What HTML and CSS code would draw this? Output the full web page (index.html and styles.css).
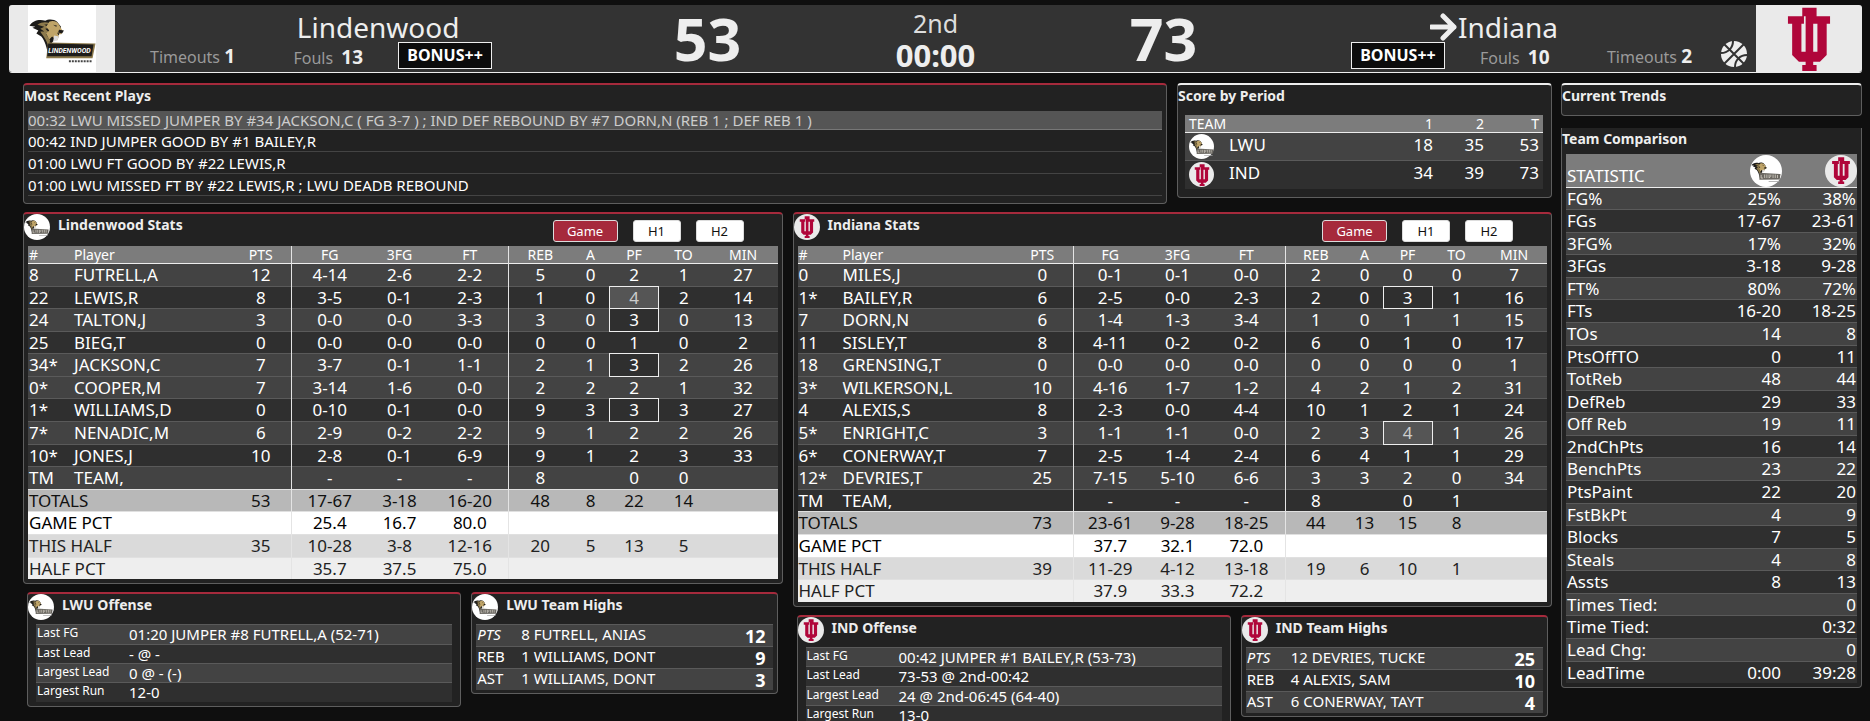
FILE: index.html
```html
<!DOCTYPE html>
<html lang="en">
<head>
<meta charset="utf-8">
<title>Lindenwood vs Indiana - Live Stats</title>
<link rel="stylesheet" href="styles.css">
</head>
<body>
<svg class="defs" aria-hidden="true">
  <symbol id="lion" viewBox="0 0 68 68">
    <path fill="#1d1c1a" d="M1 21C4 16 11 14 17 16 20 14 26 14 29 17L33 22 32 29 24 38 20 50C18 42 17 37 13 32L8 29 10 26 4 23 7 22Z"/>
    <path fill="#8d7a4c" d="M9 20C14 17 18 17 22 19L16 20 22 23 17 24 21 28 18 30 22 36 20 42C18 34 14 31 12 27L16 27 12 24 16 22Z"/>
    <path fill="#bfa468" d="M21 17C25 15 30 17 31 20L35 27 33 30 29 28 31 32 29 36 24 32 21 35 18 29 21 26 18 22Z"/>
    <path fill="#1d1c1a" d="M25 20l4 1-1 1zM31 25l5 1-2 3-4-1z"/>
    <path fill="#ddd" d="M26 31l5 1-2 4-4 1z"/>
  </symbol>
  <symbol id="lion-mark" viewBox="0 0 68 68">
    <use href="#lion"/>
    <path fill="#6b6862" d="M19 38l48 3-2 12-46 1z"/>
    <path fill="none" stroke="#cfcac0" stroke-width="2" d="M23 43v7h4m4-8v8m5-8v8m5-8v8l4-4v-4m5 0v8m5-8v8m5-7v7"/>
    <path fill="#aaa" d="M40 57h24v2H40z"/>
  </symbol>
  <symbol id="trident" viewBox="0 0 50 76">
    <path fill="#b0063a" d="M17 1h17v10h-4v42h5V20h-5V11h20v9h-4v37l-8 8h-8v4h4v7H17v-7h4v-4h-8l-8-8V20H0v-9h19v9h-3v33h5V11h-4z"/>
  </symbol>
</svg>

<header class="scoreboard">
  <div class="logo-box"><div class="logo-photo"><svg class="lion-logo" viewBox="0 0 68 68" role="img" aria-label="Lindenwood"><use href="#lion"/><path fill="#8d7a4c" d="M20 38l48 1-3 15H18z"/><path fill="#1d1c1a" d="M20 39l46 1-2 12H19z"/><text class="wordmark" x="20" y="49">LINDENWOOD</text><path stroke="#444" stroke-width="2" stroke-dasharray="2 1" d="M41 57h23"/></svg></div></div>
  <div class="side side-away">
    <div class="timeouts">Timeouts <b>1</b></div>
    <div class="team">
      <div class="team-name">Lindenwood</div>
      <div class="team-line"><span class="fouls">Fouls <b>13</b></span><strong class="bonus">BONUS++</strong></div>
    </div>
  </div>
  <div class="score">53</div>
  <div class="clock"><div class="period">2nd</div><div class="time">00:00</div></div>
  <div class="score">73</div>
  <div class="side side-home">
    <div class="team">
      <div class="team-name"><svg class="arrow" viewBox="0 0 28 28" aria-label="Possession"><path d="M1 14h23M13 3l11 11-11 11" fill="none" stroke="#eee" stroke-width="5" stroke-linecap="round" stroke-linejoin="round"/></svg>Indiana</div>
      <div class="team-line"><strong class="bonus">BONUS++</strong><span class="fouls">Fouls <b>10</b></span></div>
    </div>
    <div class="timeouts">Timeouts <b>2</b></div>
    <svg class="ball" viewBox="0 0 26 26" aria-hidden="true"><circle cx="13" cy="13" r="13" fill="#eee"/><path fill="none" stroke="#333" stroke-width="2" d="M3 3l20 20M23 3L3 23M12 0c0 7-5 12-12 12M26 14c-7 0-12 5-12 12"/></svg>
  </div>
  <div class="logo-box"><svg class="iu-logo" role="img" aria-label="Indiana"><use href="#trident"/></svg></div>
</header>

<main class="page">
  <div class="main-col">
    <div class="row-top">
      <section class="panel red">
        <h2>Most Recent Plays</h2>
        <ul class="plays">
          <li class="latest">00:32 LWU MISSED JUMPER BY #34 JACKSON,C ( FG 3-7 ) ; IND DEF REBOUND BY #7 DORN,N (REB 1 ; DEF REB 1 )</li>
          <li>00:42 IND JUMPER GOOD BY #1 BAILEY,R</li>
          <li>01:00 LWU FT GOOD BY #22 LEWIS,R</li>
          <li>01:00 LWU MISSED FT BY #22 LEWIS,R ; LWU DEADB REBOUND</li>
        </ul>
      </section>
      <section class="panel white">
        <h2>Score by Period</h2>
        <table class="periods">
          <thead><tr><th colspan="2">TEAM<th>1<th>2<th>T</thead>
          <tbody>
            <tr><td><span class="badge"><svg><use href="#lion-mark"/></svg></span><td>LWU<td>18<td>35<td>53
            <tr><td><span class="badge iu"><svg><use href="#trident"/></svg></span><td>IND<td>34<td>39<td>73
          </tbody>
        </table>
      </section>
    </div>

    <div class="row-teams">
      <div class="team-col">
        <section class="panel red stats-panel">
          <div class="panel-head"><span class="badge"><svg><use href="#lion-mark"/></svg></span><h2>Lindenwood Stats</h2>
            <div class="tabs"><button class="on" type="button">Game</button><button type="button">H1</button><button type="button">H2</button></div></div>
          <table class="stats">
            <colgroup><col class="w45"><col><col class="w61"><col class="w76"><col class="w64"><col class="w77"><col class="w63"><col class="w38"><col class="w49"><col class="w50"><col class="w69"></colgroup>
            <thead><tr><th>#<th>Player<th>PTS<th>FG<th>3FG<th>FT<th>REB<th>A<th>PF<th>TO<th>MIN</thead>
            <tbody>
              <tr><td>8<td>FUTRELL,A<td>12<td>4-14<td>2-6<td>2-2<td>5<td>0<td>2<td>1<td>27
              <tr><td>22<td>LEWIS,R<td>8<td>3-5<td>0-1<td>2-3<td>1<td>0<td class="foul4">4<td>2<td>14
              <tr><td>24<td>TALTON,J<td>3<td>0-0<td>0-0<td>3-3<td>3<td>0<td class="foul3">3<td>0<td>13
              <tr><td>25<td>BIEG,T<td>0<td>0-0<td>0-0<td>0-0<td>0<td>0<td>1<td>0<td>2
              <tr><td>34*<td>JACKSON,C<td>7<td>3-7<td>0-1<td>1-1<td>2<td>1<td class="foul3">3<td>2<td>26
              <tr><td>0*<td>COOPER,M<td>7<td>3-14<td>1-6<td>0-0<td>2<td>2<td>2<td>1<td>32
              <tr><td>1*<td>WILLIAMS,D<td>0<td>0-10<td>0-1<td>0-0<td>9<td>3<td class="foul3">3<td>3<td>27
              <tr><td>7*<td>NENADIC,M<td>6<td>2-9<td>0-2<td>2-2<td>9<td>1<td>2<td>2<td>26
              <tr><td>10*<td>JONES,J<td>10<td>2-8<td>0-1<td>6-9<td>9<td>1<td>2<td>3<td>33
              <tr><td>TM<td>TEAM,<td><td>-<td>-<td>-<td>8<td><td>0<td>0<td>
            </tbody>
            <tfoot>
              <tr><td colspan="2">TOTALS<td>53<td>17-67<td>3-18<td>16-20<td>48<td>8<td>22<td>14<td>
              <tr><td colspan="2">GAME PCT<td><td>25.4<td>16.7<td>80.0<td><td><td><td><td>
              <tr><td colspan="2">THIS HALF<td>35<td>10-28<td>3-8<td>12-16<td>20<td>5<td>13<td>5<td>
              <tr><td colspan="2">HALF PCT<td><td>35.7<td>37.5<td>75.0<td><td><td><td><td>
            </tfoot>
          </table>
        </section>
        <div class="row-extra">
          <section class="panel red">
            <div class="panel-head"><span class="badge"><svg><use href="#lion-mark"/></svg></span><h2>LWU Offense</h2></div>
            <table class="offense">
              <tr><th>Last FG<td>01:20 JUMPER #8 FUTRELL,A (52-71)
              <tr><th>Last Lead<td>- @ -
              <tr><th>Largest Lead<td>0 @ - (-)
              <tr><th>Largest Run<td>12-0
            </table>
          </section>
          <section class="panel red">
            <div class="panel-head"><span class="badge"><svg><use href="#lion-mark"/></svg></span><h2>LWU Team Highs</h2></div>
            <table class="highs">
              <tr><th><em>PTS</em><td>8 FUTRELL, ANIAS<td>12
              <tr><th>REB<td>1 WILLIAMS, DONT<td>9
              <tr><th>AST<td>1 WILLIAMS, DONT<td>3
            </table>
          </section>
        </div>
      </div>

      <div class="team-col">
        <section class="panel red stats-panel">
          <div class="panel-head"><span class="badge iu"><svg><use href="#trident"/></svg></span><h2>Indiana Stats</h2>
            <div class="tabs"><button class="on" type="button">Game</button><button type="button">H1</button><button type="button">H2</button></div></div>
          <table class="stats">
            <colgroup><col class="w44"><col><col class="w61"><col class="w74"><col class="w61"><col class="w77"><col class="w61"><col class="w37"><col class="w49"><col class="w49"><col class="w66"></colgroup>
            <thead><tr><th>#<th>Player<th>PTS<th>FG<th>3FG<th>FT<th>REB<th>A<th>PF<th>TO<th>MIN</thead>
            <tbody>
              <tr><td>0<td>MILES,J<td>0<td>0-1<td>0-1<td>0-0<td>2<td>0<td>0<td>0<td>7
              <tr><td>1*<td>BAILEY,R<td>6<td>2-5<td>0-0<td>2-3<td>2<td>0<td class="foul3">3<td>1<td>16
              <tr><td>7<td>DORN,N<td>6<td>1-4<td>1-3<td>3-4<td>1<td>0<td>1<td>1<td>15
              <tr><td>11<td>SISLEY,T<td>8<td>4-11<td>0-2<td>0-2<td>6<td>0<td>1<td>0<td>17
              <tr><td>18<td>GRENSING,T<td>0<td>0-0<td>0-0<td>0-0<td>0<td>0<td>0<td>0<td>1
              <tr><td>3*<td>WILKERSON,L<td>10<td>4-16<td>1-7<td>1-2<td>4<td>2<td>1<td>2<td>31
              <tr><td>4<td>ALEXIS,S<td>8<td>2-3<td>0-0<td>4-4<td>10<td>1<td>2<td>1<td>24
              <tr><td>5*<td>ENRIGHT,C<td>3<td>1-1<td>1-1<td>0-0<td>2<td>3<td class="foul4">4<td>1<td>26
              <tr><td>6*<td>CONERWAY,T<td>7<td>2-5<td>1-4<td>2-4<td>6<td>4<td>1<td>1<td>29
              <tr><td>12*<td>DEVRIES,T<td>25<td>7-15<td>5-10<td>6-6<td>3<td>3<td>2<td>0<td>34
              <tr><td>TM<td>TEAM,<td><td>-<td>-<td>-<td>8<td><td>0<td>1<td>
            </tbody>
            <tfoot>
              <tr><td colspan="2">TOTALS<td>73<td>23-61<td>9-28<td>18-25<td>44<td>13<td>15<td>8<td>
              <tr><td colspan="2">GAME PCT<td><td>37.7<td>32.1<td>72.0<td><td><td><td><td>
              <tr><td colspan="2">THIS HALF<td>39<td>11-29<td>4-12<td>13-18<td>19<td>6<td>10<td>1<td>
              <tr><td colspan="2">HALF PCT<td><td>37.9<td>33.3<td>72.2<td><td><td><td><td>
            </tfoot>
          </table>
        </section>
        <div class="row-extra">
          <section class="panel red">
            <div class="panel-head"><span class="badge iu"><svg><use href="#trident"/></svg></span><h2>IND Offense</h2></div>
            <table class="offense">
              <tr><th>Last FG<td>00:42 JUMPER #1 BAILEY,R (53-73)
              <tr><th>Last Lead<td>73-53 @ 2nd-00:42
              <tr><th>Largest Lead<td>24 @ 2nd-06:45 (64-40)
              <tr><th>Largest Run<td>13-0
            </table>
          </section>
          <section class="panel red">
            <div class="panel-head"><span class="badge iu"><svg><use href="#trident"/></svg></span><h2>IND Team Highs</h2></div>
            <table class="highs">
              <tr><th><em>PTS</em><td>12 DEVRIES, TUCKE<td>25
              <tr><th>REB<td>4 ALEXIS, SAM<td>10
              <tr><th>AST<td>6 CONERWAY, TAYT<td>4
            </table>
          </section>
        </div>
      </div>
    </div>
  </div>

  <aside class="side-col">
    <section class="panel white trends"><h2>Current Trends</h2></section>
    <section class="panel plain">
      <h2>Team Comparison</h2>
      <table class="compare">
        <thead><tr><th>STATISTIC<th><span class="badge big"><svg><use href="#lion-mark"/></svg></span><th><span class="badge big iu"><svg><use href="#trident"/></svg></span></thead>
        <tbody>
          <tr><td>FG%<td>25%<td>38%
          <tr><td>FGs<td>17-67<td>23-61
          <tr><td>3FG%<td>17%<td>32%
          <tr><td>3FGs<td>3-18<td>9-28
          <tr><td>FT%<td>80%<td>72%
          <tr><td>FTs<td>16-20<td>18-25
          <tr><td>TOs<td>14<td>8
          <tr><td>PtsOffTO<td>0<td>11
          <tr><td>TotReb<td>48<td>44
          <tr><td>DefReb<td>29<td>33
          <tr><td>Off Reb<td>19<td>11
          <tr><td>2ndChPts<td>16<td>14
          <tr><td>BenchPts<td>23<td>22
          <tr><td>PtsPaint<td>22<td>20
          <tr><td>FstBkPt<td>4<td>9
          <tr><td>Blocks<td>7<td>5
          <tr><td>Steals<td>4<td>8
          <tr><td>Assts<td>8<td>13
          <tr><td>Times Tied:<td><td>0
          <tr><td>Time Tied:<td><td>0:32
          <tr><td>Lead Chg:<td><td>0
          <tr><td>LeadTime<td>0:00<td>39:28
        </tbody>
      </table>
    </section>
  </aside>
</main>
</body>
</html>
```

FILE: styles.css
```css
* { box-sizing: border-box; }

html { background: #0f0f0f; }

body {
  margin: 0;
  padding: 5px 8px 0 9px;
  background: #0f0f0f;
  color: #fff;
  font: 15px/22px "Segoe UI", "Noto Sans", "Open Sans", sans-serif;
  white-space: nowrap;
}

.defs { position: absolute; width: 0; height: 0; }

/* Scoreboard */
.scoreboard {
  display: grid;
  grid-template-columns: 106px 1fr 228px 228px 228px 1fr 106px;
  height: 68px;
  background: #333;
  color: #eee;
  border-bottom: 1px solid #eee;
  border-radius: 3px;
}
.logo-box { display: flex; justify-content: center; align-items: center; background: #eaeaea; }
.logo-box:first-child { border-radius: 3px 0 0 3px; }
.logo-box:last-child { border-radius: 0 3px 3px 0; }
.logo-photo { width: 68px; height: 67px; background: #fff; }
.lion-logo { display: block; width: 68px; height: 67px; }
.wordmark { font: italic bold 7px "Roboto", sans-serif; fill: #fff; }
.iu-logo { width: 50px; height: 64px; }

.side { display: flex; align-items: flex-end; }
.side-away { padding-left: 35px; gap: 29px; }
.side-home { padding-right: 9px; justify-content: flex-end; }
.timeouts, .fouls { color: #9a9a9a; font-size: 16px; line-height: 30px; }
.timeouts b, .fouls b { color: #eee; font-size: 19px; }
.fouls b { margin-left: 4px; }
.team { width: 228px; height: 67px; }
.team-name { padding-top: 7px; font-size: 28px; line-height: 30px; text-align: center; }
.team-line { display: flex; height: 30px; align-items: flex-start; justify-content: flex-end; gap: 35px; }
.bonus {
  width: 94px;
  height: 27px;
  border: 1px solid #eee;
  background: #0c0c0c;
  color: #fff;
  font-size: 16px;
  line-height: 24px;
  text-align: center;
}
.side-home .team { width: 256px; }
.side-home .team-name { display: flex; align-items: center; padding-left: 79px; }
.side-home .team-line { justify-content: flex-start; }
.arrow { width: 28px; height: 28px; }
.ball { width: 26px; height: 26px; margin: 0 0 5px 29px; }
.score { font-size: 59px; font-weight: bold; line-height: 66px; text-align: center; }
.clock { text-align: center; }
.period { padding-top: 2px; font-size: 25px; line-height: 32px; color: #ddd; }
.time { font-size: 31px; font-weight: bold; line-height: 33px; }

/* Page grid */
.page {
  display: grid;
  grid-template-columns: 1529fr 301fr;
  gap: 9px;
  padding: 10px 0 0 14px;
}
.main-col { display: grid; align-content: start; gap: 8px; }
.row-top { display: grid; grid-template-columns: 1144fr 375fr; gap: 10px; align-items: start; }
.row-teams { display: grid; grid-template-columns: 1fr 1fr; gap: 10px; align-items: start; }
.team-col { display: grid; gap: 8px; }
.row-extra { display: grid; grid-template-columns: 434fr 307fr; gap: 10px; align-items: start; padding: 0 4px; }
.side-col { display: grid; gap: 12px; align-content: start; }

.panel { background: #222; border: 1px solid #5e5e5e; border-top: 2px solid; border-radius: 4px; }
.panel.red { border-top-color: #a62a3c; }
.panel.white { border-top-color: #eee; }
.panel.plain { border-top: 0; border-radius: 0 0 4px 4px; padding: 0 4px 4px; }
.panel.plain h2 { margin: 0 0 4px -4px; }
.trends { height: 33px; }
h2 { margin: 0; font-size: 14px; line-height: 22px; color: #eee; }

.plays { margin: 4px 4px 7px; padding: 0; list-style: none; }
.plays li { height: 22px; padding-top: 2px; border-bottom: 1px solid #444; line-height: 19px; }
.plays .latest { height: 19px; padding: 0; background: #555; color: #ccc; border-bottom-color: #777; line-height: 18px; }

.badge {
  display: inline-flex;
  justify-content: center;
  align-items: center;
  width: 26px;
  height: 26px;
  border-radius: 50%;
  background: #fff;
  vertical-align: top;
}
.badge svg { width: 24px; height: 24px; }
.badge.iu { background: #eaeaea; }
.badge.iu svg { height: 22px; }
.badge.big { width: 32px; height: 32px; }
.badge.big svg { width: 30px; height: 30px; }
.badge.big.iu svg { height: 27px; }

.panel-head { display: flex; gap: 8px; height: 30px; }
.tabs { display: flex; gap: 15px; margin: 6px 34px 0 auto; }
.tabs button {
  width: 48px;
  height: 22px;
  padding: 0;
  border: 1px solid #ddd;
  border-radius: 3px;
  background: #fff;
  color: #111;
  font: 13px/18px "Segoe UI", "Noto Sans", "Open Sans", sans-serif;
}
.tabs .on { width: 65px; background: #a62a3c; color: #fff; }

/* Tables */
table { border-collapse: collapse; border-spacing: 0; }
th { font-weight: normal; text-align: left; }
td, th { padding: 0; }
tbody tr { background: #2f2f2f; border-bottom: 1px solid #5a5a5a; }
tbody tr:nth-child(odd) { background: #434343; }
tbody tr:last-child { border-bottom: 0; }
thead tr { background: #7c7c7c; border-bottom: 1px solid #eee; }

.periods { width: calc(100% - 15px); margin: 8px 8px 8px 7px; font-size: 17px; line-height: 22px; }
.periods th { font-size: 14px; line-height: 17px; }
.periods td { height: 28px; padding-bottom: 4px; }
.periods td:first-child { width: 44px; padding: 0 0 0 4px; }
.periods th:first-child { padding-left: 4px; }
.periods td:nth-child(n+3), .periods th:nth-child(n+2) { width: 51px; text-align: right; }
.periods tr > :last-child { width: 59px; padding-right: 4px; }
.periods .badge { width: 25px; height: 25px; }

.stats-panel { padding: 0 4px 4px; }
.stats-panel .panel-head { height: 32px; margin-left: -4px; }
.stats { width: 100%; table-layout: fixed; font-size: 17px; line-height: 1.27; }
.w37 { width: 37px; } .w38 { width: 38px; } .w44 { width: 44px; } .w45 { width: 45px; } .w49 { width: 49px; }
.w50 { width: 50px; } .w61 { width: 61px; } .w63 { width: 63px; } .w64 { width: 64px; }
.w66 { width: 66px; } .w69 { width: 69px; } .w74 { width: 74px; } .w76 { width: 76px; } .w77 { width: 77px; }
.stats th { font-size: 14px; line-height: 17px; text-align: center; }
.stats td { text-align: center; }
.stats th:first-child, .stats th:nth-child(2),
.stats td:first-child, .stats tbody td:nth-child(2) { padding-left: 1px; text-align: left; }
.stats th:nth-child(3), .stats th:nth-child(6),
.stats tbody td:nth-child(3), .stats tbody td:nth-child(6),
.stats tfoot td:nth-child(2), .stats tfoot td:nth-child(5) { border-right: 1px solid #e4e4e4; }
.stats tbody tr:nth-child(n+6):nth-child(even) { background: #434343; }
.stats tbody tr:nth-child(n+6):nth-child(odd) { background: #2f2f2f; }
.stats .foul3, .stats .foul4 { border: 1px solid #eee; background: #2f2f2f; }
.stats .foul4 { background: #555; color: #ccc; }
.stats tfoot tr { border-top: 1px solid #e0e0e0; color: #222; }
.stats tfoot tr:nth-child(1) { background: #b8b8b8; color: #111; }
.stats tfoot tr:nth-child(2) { background: #fff; color: #000; }
.stats tfoot tr:nth-child(3) { background: #dadada; }
.stats tfoot tr:nth-child(4) { background: #eee; }

.offense { width: calc(100% - 16px); margin: 0 8px 4px; line-height: 1.23; font-size: 15px; }
.offense tr, .highs tr { border-top: 1px solid #5a5a5a; }
.offense th { width: 93px; padding: 0 0 2px 1px; font-size: 12px; line-height: 16px; vertical-align: top; }

.highs { width: calc(100% - 8px); margin: 0 4px 3px; font-size: 15px; line-height: 18px; }
.highs th { width: 45px; padding: 0 0 3px 1px; }
.highs td { padding-bottom: 3px; }
.highs td:last-child { padding: 1px 8px 0 0; text-align: right; font-size: 18px; font-weight: bold; line-height: 20px; }

.compare { width: 100%; font-size: 17px; line-height: 1.27; }
.compare th { height: 33px; vertical-align: bottom; text-align: right; }
.compare td { text-align: right; padding-right: 1px; }
.compare tr > :first-child { text-align: left; padding-left: 1px; }
.compare tr > :last-child { width: 75px; }
```
